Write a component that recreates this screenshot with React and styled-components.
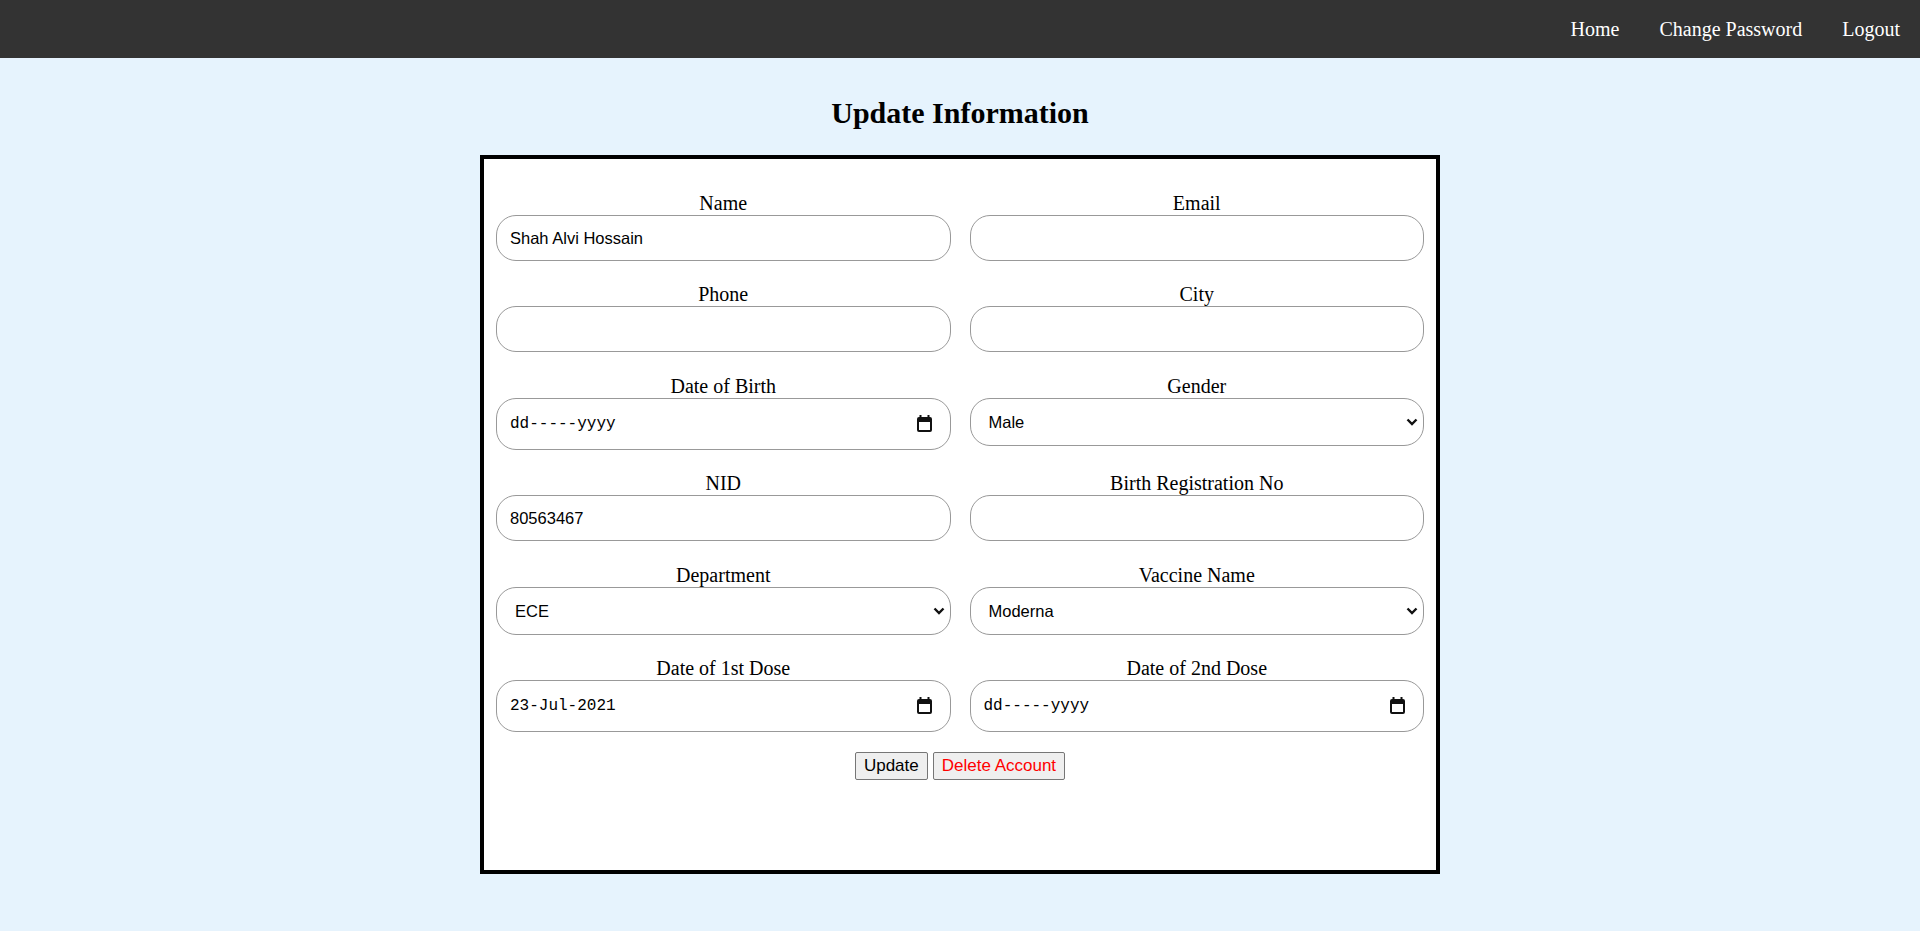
import styled, { createGlobalStyle } from "styled-components";

const fields = [
  { label: "Name", type: "text", value: "Shah Alvi Hossain" },
  { label: "Email", type: "text" },
  { label: "Phone", type: "text" },
  { label: "City", type: "text" },
  { label: "Date of Birth", type: "date" },
  { label: "Gender", type: "select", value: "Male", options: ["Male", "Female", "Other"] },
  { label: "NID", type: "text", value: "80563467" },
  { label: "Birth Registration No", type: "text" },
  { label: "Department", type: "select", value: "ECE", options: ["CSE", "ECE", "EEE", "ME"] },
  { label: "Vaccine Name", type: "select", value: "Moderna", options: ["Pfizer", "Moderna", "Sinopharm", "AstraZeneca"] },
  { label: "Date of 1st Dose", type: "date", value: "23-Jul-2021" },
  { label: "Date of 2nd Dose", type: "date" },
];

const CalendarIcon = () => (
  <svg width="17" height="17" viewBox="0 0 17 17" aria-hidden="true">
    <rect x="3.5" y="0" width="2" height="3" fill="#111" />
    <rect x="11.5" y="0" width="2" height="3" fill="#111" />
    <path
      fillRule="evenodd"
      fill="#111"
      d="M3 2h11a2 2 0 0 1 2 2v11a2 2 0 0 1-2 2H3a2 2 0 0 1-2-2V4a2 2 0 0 1 2-2zM3 7v8h11V7z"
    />
  </svg>
);

const Chevron = () => (
  <ChevronIcon width="12" height="8" viewBox="0 0 12 8" aria-hidden="true">
    <path d="M1.5 1.5L6 6l4.5-4.5" fill="none" stroke="#111" strokeWidth="2.4" />
  </ChevronIcon>
);

const Control = ({ field }) => {
  if (field.type === "date") {
    return (
      <DateField>
        <DateInput
          type="text"
          defaultValue={field.value}
          placeholder="dd-----yyyy"
        />
        <CalendarIcon />
      </DateField>
    );
  }
  if (field.type === "select") {
    return (
      <SelectWrap>
        <Select defaultValue={field.value}>
          {field.options.map((o) => (
            <option key={o}>{o}</option>
          ))}
        </Select>
        <Chevron />
      </SelectWrap>
    );
  }
  return <TextInput type="text" defaultValue={field.value || ""} />;
};

const App = () => {
  return (
    <>
      <GlobalStyle />
      <NavBar>
        <NavLink href="#">Home</NavLink>
        <NavLink href="#">Change Password</NavLink>
        <NavLink href="#">Logout</NavLink>
      </NavBar>
      <Title>Update Information</Title>
      <FormBox onSubmit={(e) => e.preventDefault()}>
        <FieldGrid>
          {fields.map((f) => (
            <Field key={f.label}>
              <Label>{f.label}</Label>
              <Control field={f} />
            </Field>
          ))}
        </FieldGrid>
        <ButtonRow>
          <Button type="submit">Update</Button>
          <Button type="button" danger>
            Delete Account
          </Button>
        </ButtonRow>
      </FormBox>
    </>
  );
};

const GlobalStyle = createGlobalStyle`
  body {
    margin: 0;
    min-height: 100vh;
    background-color: #e6f3fd;
    font-family: "Liberation Serif", "Times New Roman", serif;
    font-size: 20px;
    color: #000;
  }
`;

const NavBar = styled.nav`
  height: 58px;
  background-color: #333;
  display: flex;
  justify-content: flex-end;
  align-items: center;
`;

const NavLink = styled.a`
  padding: 0 20px;
  color: #fff;
  text-decoration: none;
  font-size: 20px;
  line-height: 23px;
`;

const Title = styled.h2`
  margin: 38px 0 25px;
  text-align: center;
  font-size: 30px;
  line-height: 34px;
  font-weight: bold;
`;

const FormBox = styled.form`
  box-sizing: border-box;
  width: 960px;
  height: 719px;
  margin: 0 auto;
  padding: 33px 12px;
  border: 4px solid #000;
  background-color: #fff;
`;

const FieldGrid = styled.div`
  display: grid;
  grid-template-columns: 1fr 1fr;
  column-gap: 19px;
  row-gap: 22.4px;
  align-items: start;
`;

const Field = styled.div`
  display: flex;
  flex-direction: column;
`;

const Label = styled.label`
  display: block;
  text-align: center;
  font-size: 20px;
  line-height: 23px;
`;

const TextInput = styled.input`
  box-sizing: border-box;
  width: 100%;
  height: 46px;
  padding: 0 13px;
  border: 1px solid #999;
  border-radius: 20px;
  font-family: "Liberation Sans", Arial, sans-serif;
  font-size: 16.5px;
  color: #000;
  background: #fff;
  outline: none;
`;

const DateField = styled.div`
  box-sizing: border-box;
  display: flex;
  align-items: center;
  height: 52px;
  padding: 0 17px 0 13px;
  border: 1px solid #999;
  border-radius: 20px;
  background: #fff;
`;

const DateInput = styled.input`
  flex: 1;
  min-width: 0;
  border: none;
  padding: 0;
  outline: none;
  background: transparent;
  font-family: "Liberation Mono", "DejaVu Sans Mono", monospace;
  font-size: 16px;
  color: #000;

  &::placeholder {
    color: #000;
    opacity: 1;
  }
`;

const SelectWrap = styled.div`
  position: relative;
`;

const Select = styled.select`
  box-sizing: border-box;
  width: 100%;
  height: 48px;
  padding: 0 30px 0 18px;
  border: 1px solid #999;
  border-radius: 20px;
  background: #fff;
  font-family: "Liberation Sans", Arial, sans-serif;
  font-size: 16.5px;
  color: #000;
  appearance: none;
  outline: none;
`;

const ChevronIcon = styled.svg`
  position: absolute;
  right: 6px;
  top: 50%;
  transform: translateY(-50%);
  pointer-events: none;
`;

const ButtonRow = styled.div`
  display: flex;
  justify-content: center;
  gap: 5px;
  margin-top: 20px;
`;

const Button = styled.button`
  padding: 3px 8px;
  border: 1px solid #767676;
  border-radius: 2px;
  background-color: #efefef;
  font-family: "Liberation Sans", Arial, sans-serif;
  font-size: 17px;
  line-height: 20px;
  color: ${(props) => (props.danger ? "#f00" : "#000")};
`;

export default App;
